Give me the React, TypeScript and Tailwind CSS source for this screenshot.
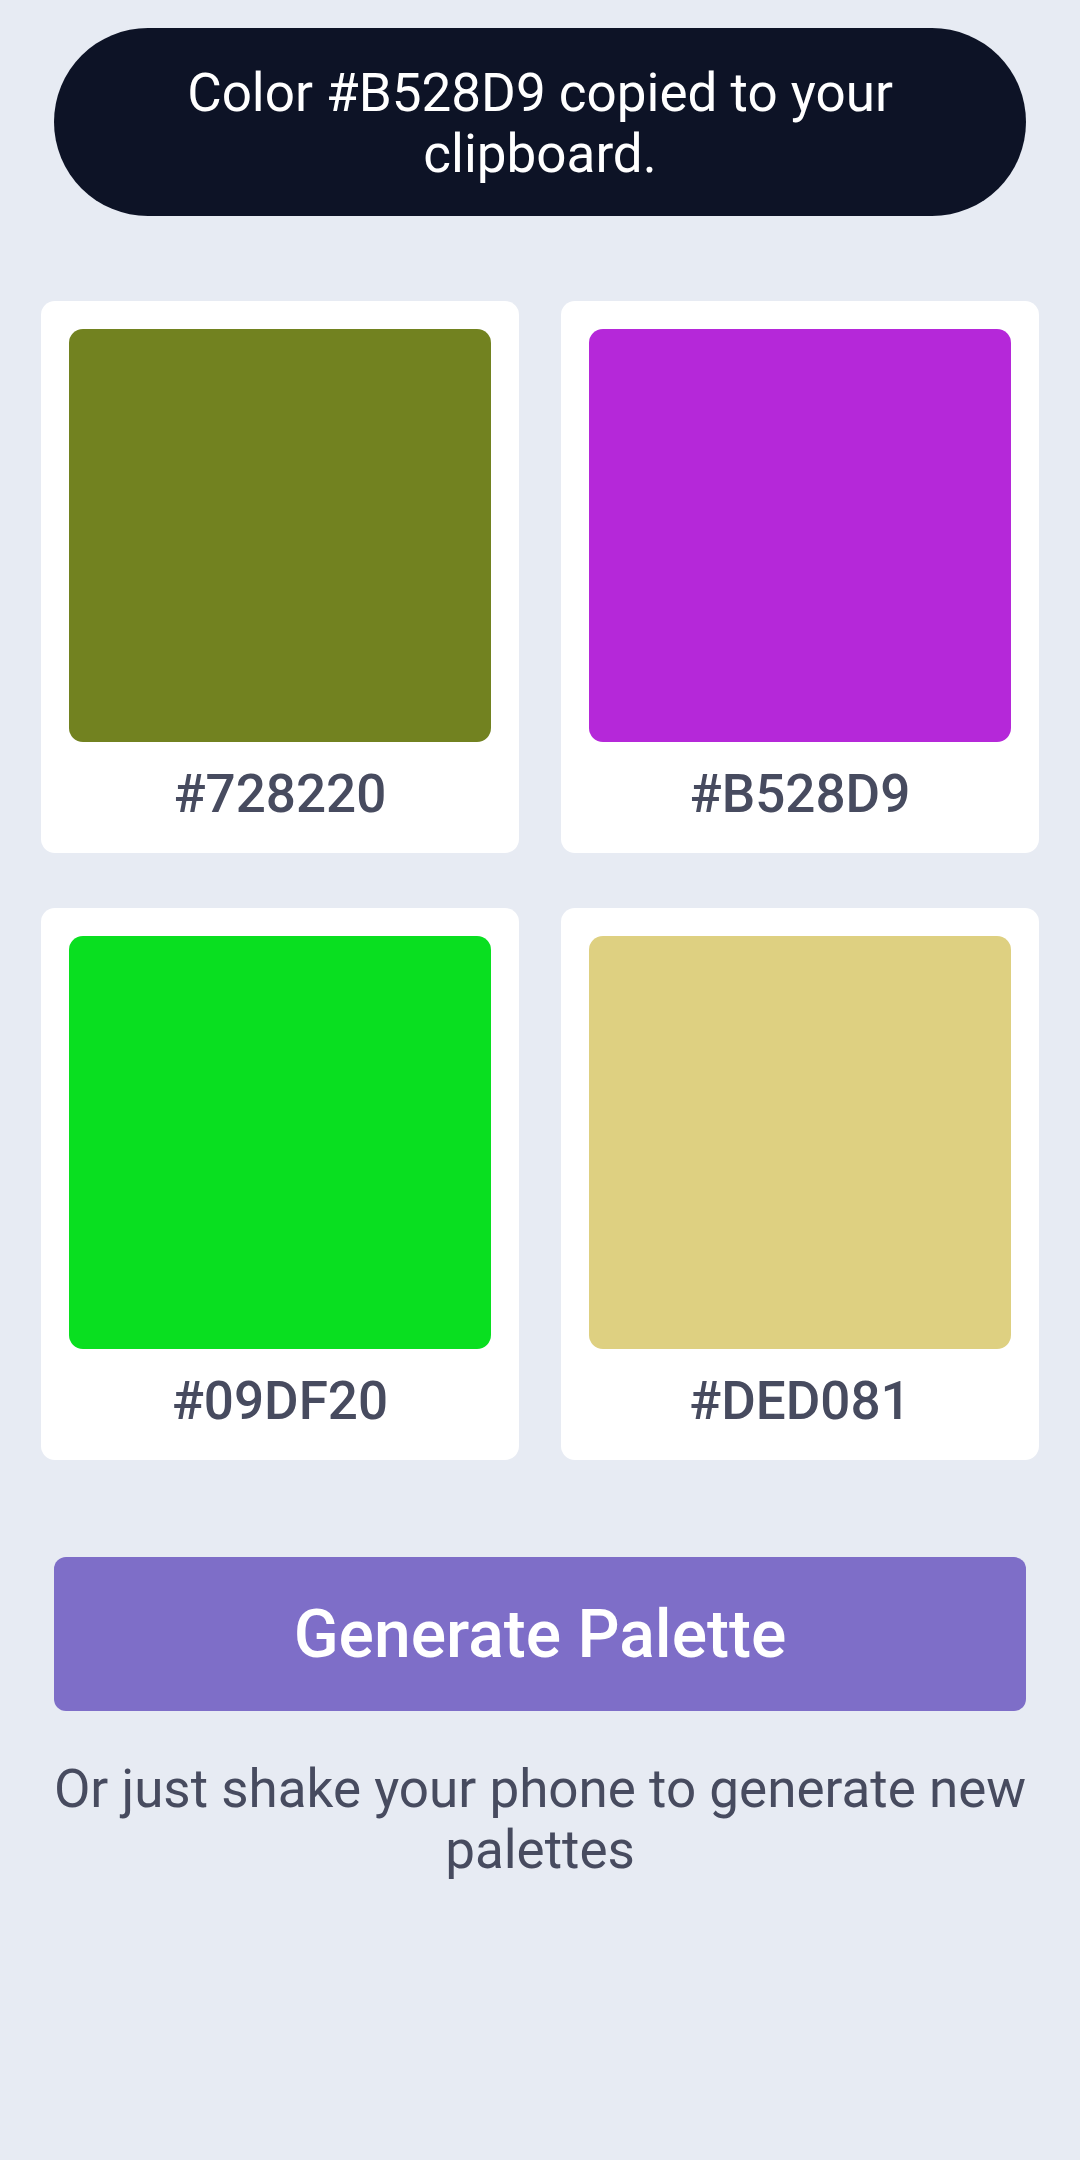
import React from "react";

const colors = ["#728220", "#B528D9", "#09DF20", "#DED081"];

const Swatch = ({ hex }: { hex: string }) => {
  return (
    <div className="bg-white rounded-[14px] p-[28px] pb-[28px] flex flex-col items-center">
      <div className="w-full h-[413px] rounded-[14px]" style={{ backgroundColor: hex }} />
      <span className="mt-[22px] text-[53px] leading-[61px] font-medium text-[#474b5f]">{hex}</span>
    </div>
  );
};

const App = () => {
  return (
    <div
      className="min-h-[2160px] w-[1080px] bg-[#e7ebf3] flex flex-col items-center"
      style={{ fontFamily: "Roboto, 'Noto Sans', sans-serif" }}
    >
      <div className="mt-[28px] w-[972px] h-[188px] rounded-full bg-[#0d1326] flex items-center justify-center px-[60px] pt-[4px]">
        <p className="text-white text-[53px] leading-[61px] text-center">
          Color #B528D9 copied to your clipboard.
        </p>
      </div>

      <div className="mt-[85px] w-[998px] grid grid-cols-2 gap-x-[42px] gap-y-[55px]">
        {colors.map((c) => (
          <Swatch key={c} hex={c} />
        ))}
      </div>

      <button className="mt-[97px] w-[972px] h-[154px] rounded-[12px] bg-[#7e6ec8] text-white text-[66px] font-medium">
        Generate Palette
      </button>

      <p className="mt-[48px] w-[1010px] text-center text-[53px] leading-[61px] text-[#474b5f]">
        Or just shake your phone to generate new palettes
      </p>
    </div>
  );
};

export default App;
